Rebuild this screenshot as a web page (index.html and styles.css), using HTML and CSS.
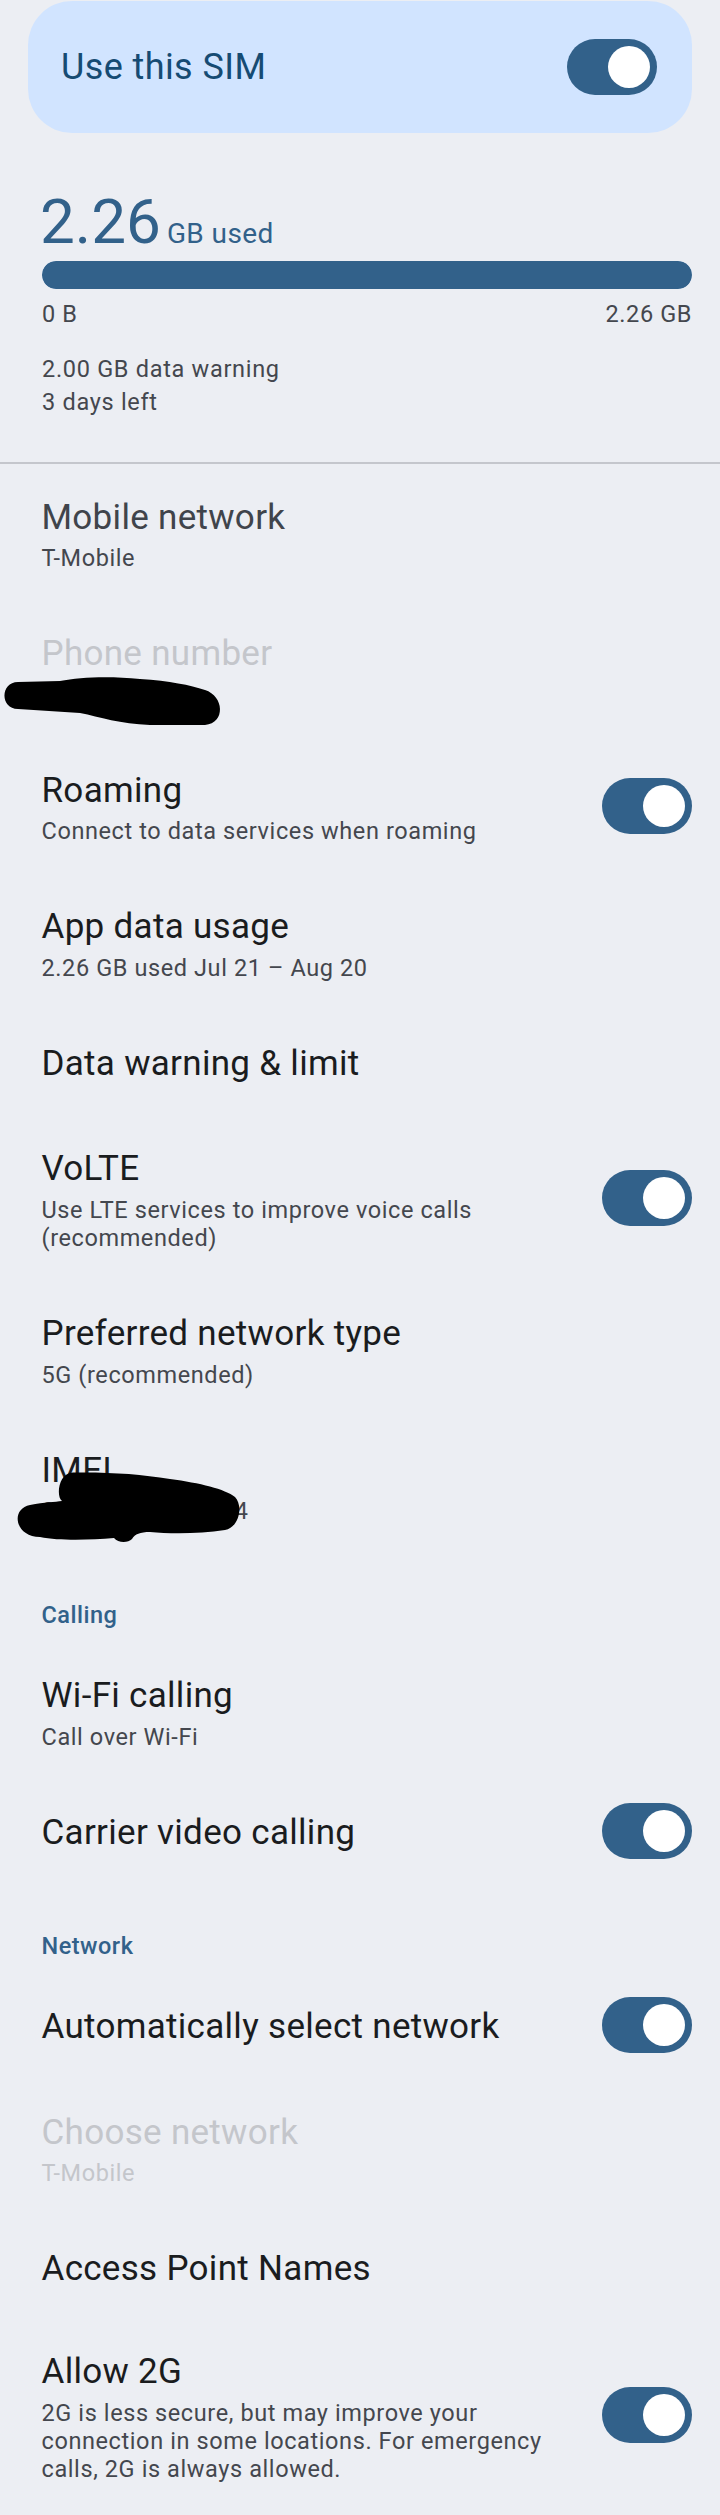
FILE: index.html
```html
<!DOCTYPE html>
<html lang="en">
<head>
<meta charset="utf-8">
<title>SIM settings</title>
<link rel="stylesheet" href="styles.css">
</head>
<body>
<div class="page">
  <div class="sim-card">
    <span class="sim-label">Use this SIM</span>
    <div class="switch"><div class="switch-thumb"></div></div>
  </div>

  <section class="usage">
    <div class="usage-total"><span class="usage-num">2.26</span><span class="usage-unit">GB used</span></div>
    <div class="usage-bar"><div class="usage-fill" style="width:100%"></div></div>
    <div class="usage-scale"><span>0 B</span><span>2.26 GB</span></div>
    <div class="usage-info">
      <div>2.00 GB data warning</div>
      <div>3 days left</div>
    </div>
  </section>

  <div class="divider"></div>

  <div class="list">
    <div class="pref">
      <div class="pref-text">
        <div class="pref-title muted">Mobile network</div>
        <div class="pref-summary">T-Mobile</div>
      </div>
    </div>

    <div class="pref disabled">
      <div class="pref-text">
        <div class="pref-title">Phone number</div>
        <div class="pref-summary">••• ••• ••••</div>
      </div>
      <svg class="redact" width="250" height="140" viewBox="0 0 250 140" aria-hidden="true">
        <path d="M18 79 L60 78 C80 74 110 73 140 76 C170 78 190 82 205 87 C224 93 226 120 205 122 L150 122 C120 121 100 114 80 110 L18 106 C0 106 0 79 18 79 Z" fill="#000"/>
      </svg>
    </div>

    <div class="pref">
      <div class="pref-text">
        <div class="pref-title">Roaming</div>
        <div class="pref-summary">Connect to data services when roaming</div>
      </div>
      <div class="switch"><div class="switch-thumb"></div></div>
    </div>

    <div class="pref">
      <div class="pref-text">
        <div class="pref-title">App data usage</div>
        <div class="pref-summary">2.26 GB used Jul 21 – Aug 20</div>
      </div>
    </div>

    <div class="pref single">
      <div class="pref-text">
        <div class="pref-title">Data warning &amp; limit</div>
      </div>
    </div>

    <div class="pref">
      <div class="pref-text">
        <div class="pref-title">VoLTE</div>
        <div class="pref-summary">Use LTE services to improve voice calls (recommended)</div>
      </div>
      <div class="switch"><div class="switch-thumb"></div></div>
    </div>

    <div class="pref">
      <div class="pref-text">
        <div class="pref-title">Preferred network type</div>
        <div class="pref-summary">5G (recommended)</div>
      </div>
    </div>

    <div class="pref">
      <div class="pref-text">
        <div class="pref-title">IMEI</div>
        <div class="pref-summary">000000000000004</div>
      </div>
      <svg class="redact" width="250" height="140" viewBox="0 0 250 140" aria-hidden="true">
        <path d="M73 53.5 C110 53 140 55 170 60 C200 64 225 70 235 78 C243 86 240 108 225 111 C200 115 170 115 150 113 C140 113 135 115 132 120 C128 124 118 124 114 119 C90 121 60 122 40 118 C15 118 10 90 30 86 C45 83 55 83 62 82 C56 78 58 54 73 53.5 Z" fill="#000"/>
      </svg>
    </div>

    <div class="category">Calling</div>

    <div class="pref">
      <div class="pref-text">
        <div class="pref-title">Wi-Fi calling</div>
        <div class="pref-summary">Call over Wi-Fi</div>
      </div>
    </div>

    <div class="pref single">
      <div class="pref-text">
        <div class="pref-title">Carrier video calling</div>
      </div>
      <div class="switch"><div class="switch-thumb"></div></div>
    </div>

    <div class="category">Network</div>

    <div class="pref single">
      <div class="pref-text">
        <div class="pref-title">Automatically select network</div>
      </div>
      <div class="switch"><div class="switch-thumb"></div></div>
    </div>

    <div class="pref disabled">
      <div class="pref-text">
        <div class="pref-title">Choose network</div>
        <div class="pref-summary">T-Mobile</div>
      </div>
    </div>

    <div class="pref single">
      <div class="pref-text">
        <div class="pref-title">Access Point Names</div>
      </div>
    </div>

    <div class="pref tall">
      <div class="pref-text">
        <div class="pref-title">Allow 2G</div>
        <div class="pref-summary">2G is less secure, but may improve your connection in some locations. For emergency calls, 2G is always allowed.</div>
      </div>
      <div class="switch"><div class="switch-thumb"></div></div>
    </div>
  </div>
</div>
</body>
</html>
```

FILE: styles.css
```css
html, body {
  margin: 0;
  padding: 0;
  background: #ECEEF3;
  font-family: Roboto, "Noto Sans", "Liberation Sans", sans-serif;
}

.page {
  width: 720px;
  overflow: hidden;
}

/* SIM card */
.sim-card {
  margin: 1px 28px 0;
  height: 132px;
  border-radius: 44px;
  background: #D1E4FF;
  display: flex;
  align-items: center;
  justify-content: space-between;
  padding: 0 35px 0 33px;
  box-sizing: border-box;
}

.sim-label {
  font-size: 36px;
  line-height: 42px;
  letter-spacing: 0.4px;
  color: #164B73;
}

/* switch */
.switch {
  width: 90px;
  height: 56px;
  border-radius: 28px;
  background: #32618A;
  display: flex;
  align-items: center;
  justify-content: flex-end;
  padding-right: 7px;
  box-sizing: border-box;
  flex-shrink: 0;
}

.switch-thumb {
  width: 42px;
  height: 42px;
  border-radius: 50%;
  background: #FFFFFF;
}

/* usage */
.usage {
  padding: 0 28px 0 42px;
  margin-top: 52.5px;
}

.usage-total {
  display: flex;
  align-items: baseline;
  color: #32618A;
}

.usage-num {
  font-size: 62px;
  line-height: 72px;
  margin-left: -2px;
}

.usage-unit {
  font-size: 28px;
  letter-spacing: 0.4px;
  margin-left: 6px;
}

.usage-bar {
  margin-top: 3.2px;
  height: 28px;
  border-radius: 14px;
  background: #C4D6EA;
  overflow: hidden;
}

.usage-fill {
  height: 100%;
  background: #32618A;
  border-radius: 14px;
}

.usage-scale {
  margin-top: 11.5px;
  display: flex;
  justify-content: space-between;
  font-size: 23.5px;
  line-height: 28.3px;
  letter-spacing: 0.6px;
  color: #44474E;
}

.usage-info {
  margin-top: 24.3px;
  font-size: 23.5px;
  line-height: 33.7px;
  letter-spacing: 0.7px;
  color: #44474E;
}

.divider {
  margin-top: 41.8px;
  height: 2px;
  background: #C4C6CC;
}

.list {
  padding-top: 2.35px;
}

/* preference rows */
.pref {
  position: relative;
  display: flex;
  align-items: center;
  gap: 24px;
  padding: 30.35px 28px 30.35px 41.5px;
}

.pref.single {
  padding-bottom: 33.35px;
}

.pref.tall {
  padding-top: 27.5px;
}

.pref .switch {
  margin: -9px 0 -5px;
}

.pref-text {
  flex: 1;
  min-width: 0;
}

.pref-title {
  font-size: 35px;
  line-height: 42px;
  letter-spacing: 0.3px;
  color: #1A1C1E;
}

.pref-title.muted {
  color: #40444B;
}

.pref-summary {
  margin-top: 5.5px;
  font-size: 23.5px;
  line-height: 28.3px;
  letter-spacing: 0.6px;
  color: #44474E;
}

.pref.disabled .pref-title,
.pref.disabled .pref-summary {
  color: #C4C6CB;
}

.redact {
  position: absolute;
  left: 0;
  top: 0;
  pointer-events: none;
}

.category {
  padding: 45px 28px 16px 41.5px;
  font-size: 23.5px;
  line-height: 28px;
  font-weight: 500;
  letter-spacing: 0.5px;
  color: #32618A;
}
```
